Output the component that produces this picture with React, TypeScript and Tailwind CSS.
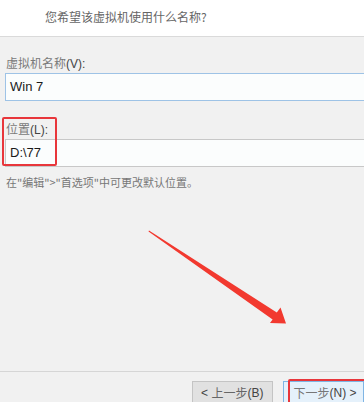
import React from "react";

const cjk = { fontFamily: '"Noto Sans CJK SC", "Liberation Sans", sans-serif' };
const latin = { fontFamily: '"Liberation Sans", "Noto Sans CJK SC", sans-serif' };

const Label = ({ cn, key_ }: { cn: string; key_: string }) => (
  <div className="h-[16px] text-[12px] leading-[16px] pl-[6px]">
    <span className="text-[#7a7a7a]" style={cjk}>{cn}</span>
    <span className="text-[#444]" style={latin}>({key_}):</span>
  </div>
);

const Field = ({ value, focused }: { value: string; focused?: boolean }) => (
  <div
    className={`ml-[5px] w-[400px] h-[28px] border bg-[#fbfdfd] pl-[4px] flex items-center text-[13px] text-[#1a1a1a] ${
      focused ? "border-[#9ec3e6]" : "border-[#c8c8c8]"
    }`}
    style={latin}
  >
    {value}
  </div>
);

export default function App() {
  return (
    <div className="relative w-[364px] h-[402px] overflow-hidden bg-[#f1f1f1]">
      <div className="h-[37px] bg-white border-b border-[#dadada] pl-[45px] pt-[4px]">
        <span className="text-[12px] leading-[16px] text-[#666]" style={cjk}>
          您希望该虚拟机使用什么名称?
        </span>
      </div>

      <div className="pt-[18px]">
        <Label cn="虚拟机名称" key_="V" />
        <div className="mt-[2px]">
          <Field value="Win 7" focused />
        </div>
        <div className="mt-[20px]">
          <Label cn="位置" key_="L" />
        </div>
        <div className="mt-[2px]">
          <Field value="D:\77" />
        </div>
        <div className="mt-[8px] pl-[6px] text-[11px] leading-[14px] text-[#777]" style={cjk}>
          在"编辑"&gt;"首选项"中可更改默认位置。
        </div>
      </div>

      <div className="absolute left-0 right-0 top-[371px] border-t border-[#d6d6d6] pt-[9px] flex gap-[10px] pl-[192px]">
        <div className="w-[88px] h-[24px] bg-[#e1e1e1] border border-[#c4c4c4] flex items-center justify-center text-[12px] text-[#666]">
          <span style={latin} className="text-[#444]">&lt;&nbsp;</span>
          <span style={cjk}>上一步</span>
          <span style={latin} className="text-[#444]">(B)</span>
        </div>
        <div className="w-[88px] h-[24px] bg-[#e5f1fb] border border-[#7fb5e4] flex items-center pl-[10px] text-[12px] text-[#777]">
          <span style={cjk}>下一步</span>
          <span style={latin} className="text-[#444]">(N)&nbsp;&gt;</span>
        </div>
      </div>

      {/* red annotation boxes */}
      <div className="absolute left-[2px] top-[117px] w-[55px] h-[49px] border-2 border-[#e8363b] rounded-[2px]" />
      <div className="absolute left-[288px] top-[379px] w-[90px] h-[30px] border-2 border-[#e8363b] rounded-[2px]" />

      <svg className="absolute left-0 top-0" width="364" height="402" viewBox="0 0 364 402">
        <polygon
          points="149,230.4 276.8,312.6 280.5,307.5 286,323.5 270,323 272.6,319.4 148.5,231.5"
          fill="#f2392f"
        />
      </svg>
    </div>
  );
}
